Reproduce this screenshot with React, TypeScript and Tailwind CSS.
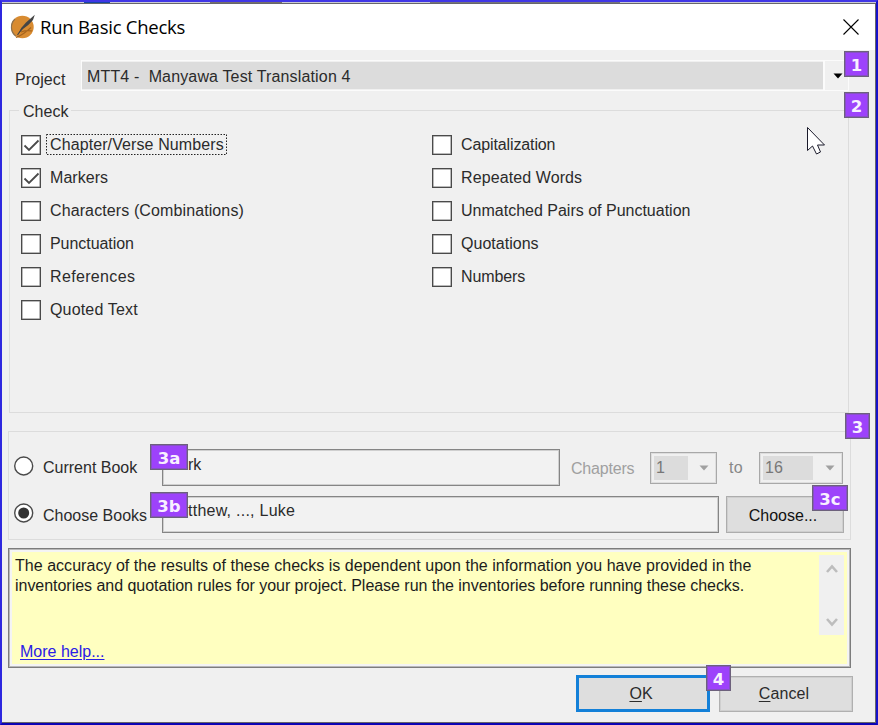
import React from 'react';

const leftChecks = [
  { label: 'Chapter/Verse Numbers', on: true, focus: true, track: 'tracking-[0.1px]' },
  { label: 'Markers', on: true, track: 'tracking-[0.05px]' },
  { label: 'Characters (Combinations)', track: 'tracking-[0.11px]' },
  { label: 'Punctuation', track: 'tracking-[-0.05px]' },
  { label: 'References', track: 'tracking-[0.35px]' },
  { label: 'Quoted Text', track: 'tracking-[0.16px]' },
];

const rightChecks = [
  { label: 'Capitalization', track: 'tracking-[-0.12px]' },
  { label: 'Repeated Words', track: 'tracking-[0.1px]' },
  { label: 'Unmatched Pairs of Punctuation', track: 'tracking-[0px]' },
  { label: 'Quotations', track: 'tracking-[0.02px]' },
  { label: 'Numbers', track: 'tracking-[-0.1px]' },
];

type Check = { label: string; on?: boolean; focus?: boolean; track: string };

function CheckRow({ label, on, focus, track }: Check) {
  return (
    <div className="flex h-[33px] items-start">
      <span className="flex h-5 w-5 shrink-0 items-center justify-center border border-[#4a4a4a] bg-white shadow-[inset_0_0_0_0.5px_#777]">
        {on && (
          <svg width="17" height="17" viewBox="0 0 17 17" className="shrink-0">
            <path d="M1.5 8.5 L6 13 L15.5 3.5" fill="none" stroke="#4a4a4a" strokeWidth="1.8" />
          </svg>
        )}
      </span>
      <span className={'relative ml-[5px] flex h-5 items-center whitespace-nowrap pl-1 pr-[3px] ' + track}>
        {label}
        {focus && (
          <svg className="absolute -top-px left-0 h-[21px] w-full overflow-visible">
            <rect x="0.5" y="0.5" width="180" height="20" fill="none" stroke="#222" strokeDasharray="1.5 1.5" />
          </svg>
        )}
      </span>
    </div>
  );
}

function Radio({ on }: { on?: boolean }) {
  return (
    <svg width="20" height="20" viewBox="0 0 20 20" className="-mt-[3px] shrink-0">
      <circle cx="9.7" cy="10" r="9" fill="#fff" stroke="#4a4a4a" strokeWidth="1.4" />
      {on && <circle cx="9.7" cy="10" r="5.5" fill="#333" />}
    </svg>
  );
}

function Arrow({ color }: { color: string }) {
  return (
    <svg width="10" height="6" viewBox="0 0 10 6">
      <path d="M0.5 0.5H9.5L5 5.5Z" fill={color} />
    </svg>
  );
}

function Select({ value, width, inner }: { value: string; width: string; inner: string }) {
  return (
    <div
      className={
        'flex h-8 items-center border border-[#a8a8a8] pl-[3px] shadow-[inset_0_0_0_1px_#dedede] ' + width
      }
    >
      <div className={'flex h-6 items-center bg-[#dcdcdc] pl-0.5 pt-px text-[#777] ' + inner}>{value}</div>
      <div className="flex flex-1 justify-center pl-1">
        <Arrow color="#a0a0a0" />
      </div>
    </div>
  );
}

function Badge({ text, place }: { text: string; place: string }) {
  return (
    <div
      className={
        'absolute flex h-[26px] items-center justify-center border border-[#6d617c] bg-[#9d42fb] pt-[4px] font-["DejaVu_Sans",sans-serif] text-[16.5px] font-bold leading-none text-[#f8f0ff] shadow-[inset_0_0_0_1px_#8650c4] ' +
        place
      }
    >
      {text}
    </div>
  );
}

export default function App() {
  return (
    <div className="relative flex h-[725px] w-[878px] flex-col overflow-hidden border-2 border-t-[#4036e6] border-r-[#1511c9] border-b-[#0c04b4] border-l-[#2e27df] bg-[#f0f0f0] font-['Liberation_Sans',Arial,sans-serif] text-[16px] leading-5 text-[#2b2b2b]">
      <div className="flex h-px shrink-0 bg-[#c9c9d2]">
        <div className="ml-[82px] w-[26px] bg-[#1646a8]" />
        <div className="ml-[100px] w-[72px] bg-[#77706c]" />
        <div className="ml-[148px] w-[190px] bg-[#77757c]" />
      </div>
      <div className="flex h-[720px] flex-col border-t border-r border-b border-[#66666a]">
        <header className="flex h-[46px] shrink-0 items-center bg-white pl-2">
          <svg width="26" height="26" viewBox="0 0 26 26" className="shrink-0">
            <circle cx="12.4" cy="13" r="11.3" fill="#d88b31" />
            <path d="M5 5 A11.3 11.3 0 0 0 6 22.3" fill="none" stroke="#8d7250" strokeWidth="1.2" />
            <path d="M6 23.5 Q13 21 21 13.5 M11 18 Q16 16 22 17" fill="none" stroke="#a7641c" strokeWidth="1.1" />
            <path d="M8.5 19.5 Q11 13 16 8.5 L24.8 0.8 L23 6 Q18 12 13 15 Z" fill="#454545" />
            <path d="M7.5 21 L12 14.5" stroke="#454545" strokeWidth="1.2" />
          </svg>
          <h1 className="ml-1 whitespace-nowrap font-['Open_Sans',sans-serif] text-[18.5px] tracking-[-0.25px] text-black">
            Run Basic Checks
          </h1>
          <svg width="16" height="16" viewBox="0 0 16 16" className="ml-auto mr-[16px]">
            <path d="M0.5 0.5 L15.5 15.5 M15.5 0.5 L0.5 15.5" stroke="#000" strokeWidth="1.1" />
          </svg>
        </header>

        <div className="mt-[10px] flex h-[31px] shrink-0 pl-[13px]">
          <span className="mt-[10px] w-[66px] tracking-[0.1px]">Project</span>
          <div className="flex w-[768px] border border-[#fbfbfb]">
            <div className="mb-px mt-px flex w-[741px] items-center whitespace-pre bg-[#dcdcdc] pl-[5px] pt-[3px] tracking-[0.15px]">
              {'MTT4 -  Manyawa Test Translation 4'}
            </div>
            <div className="flex flex-1 items-center justify-center border-l-2 border-[#fbfbfb] pl-0.5">
              <Arrow color="#000" />
            </div>
          </div>
        </div>

        <section className="ml-[7px] mt-[19px] h-[303px] w-[840px] shrink-0 border border-[#dcdcdc]">
          <h2 className="-mt-[9px] ml-[9px] h-5 w-[52px] bg-[#f0f0f0] pl-[4px] tracking-[0.05px]">Check</h2>
          <div className="mt-[13px] flex pl-[11px]">
            <div className="w-[411px]">
              {leftChecks.map((c) => (
                <CheckRow key={c.label} {...c} />
              ))}
            </div>
            <div>
              {rightChecks.map((c) => (
                <CheckRow key={c.label} {...c} />
              ))}
            </div>
          </div>
        </section>

        <section className="ml-[6px] mt-[18px] flex h-[109px] w-[843px] shrink-0 flex-col border border-[#dcdcdc] pl-[5px] pt-[17px]">
          <div className="flex h-[37px] items-center">
            <Radio />
            <span className="ml-[9px] mt-px w-[119px] whitespace-nowrap">Current Book</span>
            <div className="h-[37px] w-[398px] border border-[#858585] bg-[#f2f2f2] pl-[25px] pt-[5px] shadow-[inset_0_0_0_1px_#cfcfcf]">
              rk
            </div>
            <span className="ml-[11px] mt-[2px] w-[79px] tracking-[-0.2px] text-[#a0a0a0]">Chapters</span>
            <Select value="1" width="w-[67px]" inner="w-[34px]" />
            <span className="ml-[12px] mt-px w-[30px] tracking-[0.3px] text-[#888]">to</span>
            <Select value="16" width="w-[84px]" inner="w-[50px]" />
          </div>
          <div className="mt-[10px] flex h-[37px] items-center">
            <Radio on />
            <span className="ml-[9px] mt-[2px] w-[119px] whitespace-nowrap">Choose Books</span>
            <div className="h-[37px] w-[557px] border border-[#858585] bg-[#f2f2f2] pl-[25px] pt-[4px] tracking-[0.25px] shadow-[inset_0_0_0_1px_#cfcfcf]">
              tthew, ..., Luke
            </div>
            <button className="ml-[7px] h-[37px] w-[118px] border border-[#adadad] bg-[#dedede] pr-1 pt-0.5 text-[#111] shadow-[inset_0_0_0_1px_#cfcfcf]">
              Choose...
            </button>
          </div>
        </section>

        <section className="ml-[6px] mt-[8px] h-[120px] w-[843px] shrink-0 border border-[#7c7c7c] bg-[#f4f4f4] p-[3px] shadow-[inset_0_0_0_1px_#b8b8b8]">
          <div className="flex h-full bg-[#ffffc0] text-[#1c1c1c]">
            <div className="flex w-[807px] flex-col whitespace-nowrap pl-[3px] pt-[4px]">
              <p className="tracking-[0.035px]">
                The accuracy of the results of these checks is dependent upon the information you have provided in the
              </p>
              <p className="tracking-[-0.035px]">
                inventories and quotation rules for your project. Please run the inventories before running these checks.
              </p>
              <a className="ml-[5px] mt-[46px] w-fit text-[#2a20e6] underline underline-offset-2">More help...</a>
            </div>
            <div className="mt-[3px] flex h-20 w-[25px] flex-col items-center justify-between bg-[#f0f0f0] pb-[8px] pt-[9px]">
              <svg width="12" height="10" viewBox="0 0 12 10">
                <path d="M1 8 L6 2.5 L11 8" fill="none" stroke="#bdbdbd" strokeWidth="2.6" />
              </svg>
              <svg width="12" height="10" viewBox="0 0 12 10">
                <path d="M1 2 L6 7.5 L11 2" fill="none" stroke="#bdbdbd" strokeWidth="2.6" />
              </svg>
            </div>
          </div>
        </section>

        <footer className="mt-[7px] flex shrink-0 items-center pl-[574px]">
          <button className="h-[37px] w-[134px] border-[3px] border-[#1380d8] bg-[#dedede] pr-1">
            <u className="underline-offset-2">O</u>K
          </button>
          <button className="ml-[9px] h-9 w-[134px] border border-[#b0b0b0] bg-[#dedede] pr-1 tracking-[0.1px] shadow-[inset_0_0_0_1px_#cfcfcf]">
            <u className="underline-offset-2">C</u>ancel
          </button>
        </footer>
      </div>

      <svg width="20" height="30" viewBox="0 0 20 30" className="absolute left-[805px] top-[125px]">
        <path
          d="M0.5 0.5 V23.5 L5.5 19 L9.5 27 L13.5 25 L10.5 18 H17.5 Z"
          fill="#fff"
          stroke="#1b1b2b"
          strokeWidth="1"
        />
      </svg>

      <Badge text="1" place="left-[842px] top-[49px] w-[25px]" />
      <Badge text="2" place="left-[842px] top-[90px] w-[25px]" />
      <Badge text="3" place="left-[843px] top-[411px] w-[25px]" />
      <Badge text="3a" place="left-[148px] top-[442px] w-[38px]" />
      <Badge text="3b" place="left-[148px] top-[490px] w-[38px]" />
      <Badge text="3c" place="left-[810px] top-[483px] w-[36px]" />
      <Badge text="4" place="left-[704px] top-[663px] w-[25px]" />
    </div>
  );
}
